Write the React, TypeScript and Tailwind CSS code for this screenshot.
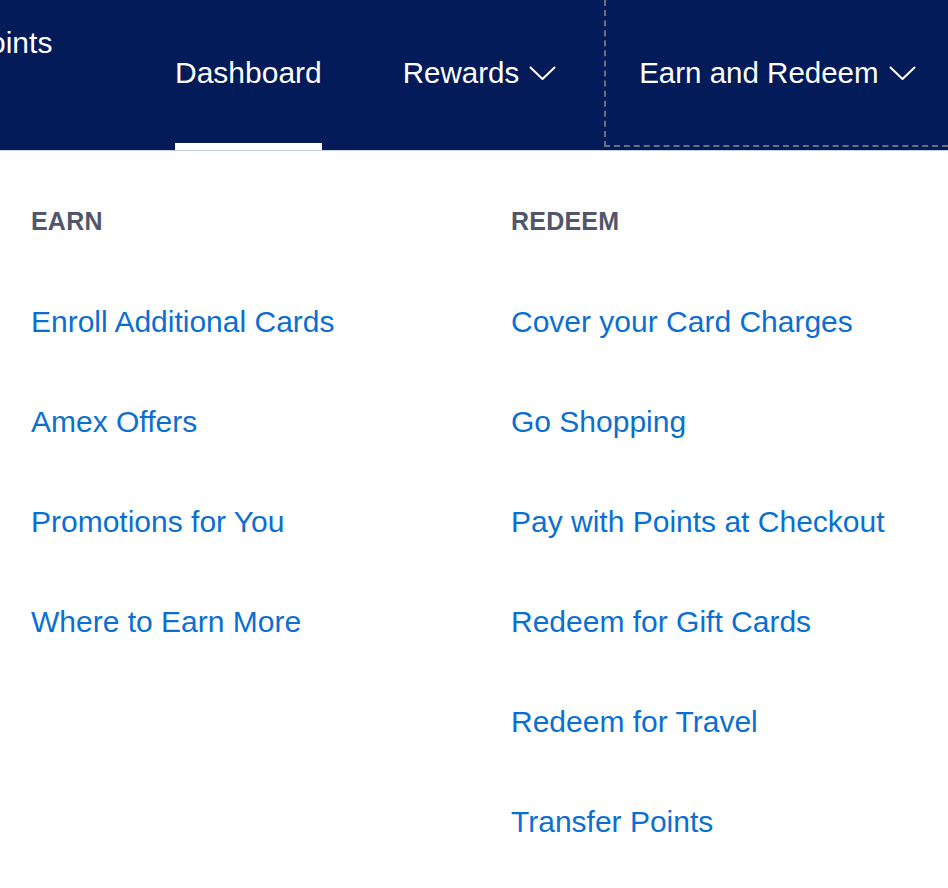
import React from "react";

const Chevron = () => (
  <svg width="27" height="15" viewBox="0 0 27 15" fill="none" className="shrink-0">
    <polyline points="1.5,1.5 13.5,13 25.5,1.5" stroke="#ffffff" strokeWidth="2" strokeLinecap="round" strokeLinejoin="round" />
  </svg>
);

const earn = ["Enroll Additional Cards", "Amex Offers", "Promotions for You", "Where to Earn More"];
const redeem = [
  "Cover your Card Charges",
  "Go Shopping",
  "Pay with Points at Checkout",
  "Redeem for Gift Cards",
  "Redeem for Travel",
  "Transfer Points",
];

const Column = ({ title, items, width }: { title: string; items: string[]; width: string }) => (
  <div className={`flex flex-col ${width}`}>
    <div className="text-[25px] leading-[25px] font-bold text-[#52566a] tracking-[0.2px]">{title}</div>
    <ul className="mt-[73px] flex flex-col gap-[70px]">
      {items.map((t) => (
        <li key={t} className="text-[30px] leading-[30px] text-[#0a6fd1] whitespace-nowrap">
          {t}
        </li>
      ))}
    </ul>
  </div>
);

export default function App() {
  return (
    <div className="w-[948px] h-[888px] overflow-hidden bg-white font-['Liberation_Sans',Arial,sans-serif]">
      <header className="h-[151px] bg-[#031b59] border-b border-[#c6cfe3] flex items-start text-white overflow-hidden">
        <div className="w-[175px] shrink-0 pt-[28px]">
          <div className="ml-[-31px] text-[30px] leading-[30px] whitespace-nowrap">Points</div>
        </div>
        <div className="flex flex-col justify-between h-[150px] shrink-0">
          <div className="pt-[58px] text-[30px] leading-[30px] whitespace-nowrap">Dashboard</div>
          <div className="h-[7px] bg-white" />
        </div>
        <div className="ml-[81px] pt-[58px] flex items-center gap-[10px] shrink-0">
          <span className="text-[29.5px] leading-[30px] whitespace-nowrap">Rewards</span>
          <Chevron />
        </div>
        <div className="ml-[48px] h-[147px] shrink-0 border-2 border-t-0 border-dashed border-[#6b6f7c] pl-[33px] pr-[40px] pt-[58px] flex items-start">
          <div className="flex items-center gap-[10px]">
            <span className="text-[29.5px] leading-[30px] whitespace-nowrap">Earn and Redeem</span>
            <Chevron />
          </div>
        </div>
      </header>
      <main className="flex pl-[31px] pt-[58px]">
        <Column title="EARN" items={earn} width="w-[480px]" />
        <Column title="REDEEM" items={redeem} width="w-[437px]" />
      </main>
    </div>
  );
}
